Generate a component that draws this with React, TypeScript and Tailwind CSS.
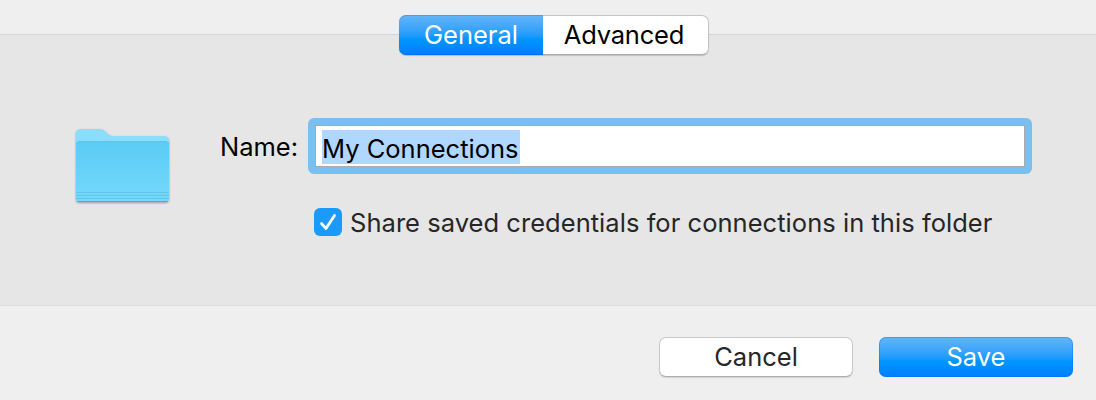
import { useState } from "react";

const tabs = [
  { label: "General", width: "w-[144px] rounded-l-[7px]" },
  {
    label: "Advanced",
    width: "w-[166px] rounded-r-[7px] pr-[3px] tracking-[-0.2px]",
  },
];

const blueFill =
  "bg-linear-to-b from-[#63b5f8] via-[#0096fc] via-60% to-[#007dff] text-white";

function FolderIcon() {
  return (
    <svg width="104" height="84" viewBox="0 0 104 84" aria-hidden="true">
      <defs>
        <linearGradient id="folder-front" x1="0" y1="0" x2="0" y2="1">
          <stop offset="0" stopColor="#5bcbf5" />
          <stop offset="1" stopColor="#74d9fb" />
        </linearGradient>
        <filter id="folder-shadow" x="-10%" y="-10%" width="120%" height="125%">
          <feDropShadow dx="0" dy="1" stdDeviation="1" floodOpacity="0.35" />
        </filter>
      </defs>
      <g filter="url(#folder-shadow)">
        <path
          d="M5 9q0-5 5-5h19q3 0 5 2l3 3q2 2 5 2h51q5 0 5 5v56q0 5-5 5H9q-4 0-4-4z"
          fill="#8bddfd"
        />
        <path
          d="M5 20q0-4 4-4h85q4 0 4 4v53q0 4-4 4H9q-4 0-4-4z"
          fill="url(#folder-front)"
        />
      </g>
      <path
        d="M5.500 19q0-2.500 3.500-2.500h85q3.500 0 3.500 2.500"
        fill="none"
        stroke="#5ac5ef"
      />
      <path d="M5 67.500h93M5 70.500h93M5 73.500h93" stroke="#62c6ea" />
      <path d="M6 76.500h91" stroke="#4fb0d2" />
    </svg>
  );
}

function App() {
  const [active, setActive] = useState("General");
  const [shared, setShared] = useState(true);

  return (
    <main className="flex h-[400px] w-[1096px] flex-col overflow-hidden bg-[#efefef] pt-[34px] font-['Inter',sans-serif] text-[25.5px] leading-[40px] text-black">
      <section className="flex h-[272px] flex-col border-y border-t-[#d5d5d5] border-b-[#dedede] bg-[#e6e6e6]">
        <div className="-mt-[20px] ml-[399px] flex h-[40px] w-[310px] rounded-[7px] shadow-[0_1px_1px_rgba(0,0,0,0.18)]">
          {tabs.map((tab) => (
            <button
              key={tab.label}
              onClick={() => setActive(tab.label)}
              className={`${tab.width} h-[40px] shrink-0 ${
                active === tab.label
                  ? `${blueFill} shadow-[inset_0_1px_0_rgba(0,110,220,0.3),inset_0_-1px_0_rgba(0,90,230,0.4)]`
                  : "border-y border-r border-[#c4c4c4] border-b-[#adadad] bg-white leading-[38px]"
              }`}
            >
              {tab.label}
            </button>
          ))}
        </div>

        <div className="mt-[63px] flex">
          <div className="mt-[7px] ml-[71px] h-[84px] w-[104px]">
            <FolderIcon />
          </div>
          <div className="ml-[45px] w-[88px] pt-[9px]">Name:</div>
          <div>
            <div className="h-[56px] w-[724px] rounded-[6px] bg-[#7bbfef] p-[7px]">
              <div className="h-[42px] border border-[#aaaaaa] bg-white pt-[4px] pl-[6px]">
                <span className="block h-[34px] w-[198px] bg-[#b0d7ff] leading-[38px] whitespace-nowrap">
                  My Connections
                </span>
              </div>
            </div>
            <button
              onClick={() => setShared(!shared)}
              className="mt-[29px] ml-[6px] flex items-center text-[#262626]"
            >
              <span className="mr-[8px] mb-[2px] flex size-[28px] items-center justify-center rounded-[6px] bg-[#1a9bfb]">
                {shared && (
                  <svg width="28" height="28" viewBox="0 0 28 28" fill="none">
                    <path
                      d="M7.500 15.500l4.500 5L20.500 7.500"
                      stroke="white"
                      strokeWidth="2.800"
                      strokeLinecap="round"
                      strokeLinejoin="round"
                    />
                  </svg>
                )}
              </span>
              <span className="whitespace-nowrap tracking-[0.04px]">
                Share saved credentials for connections in this folder
              </span>
            </button>
          </div>
        </div>
      </section>

      <footer className="mt-[31px] mr-[23px] flex justify-end gap-[26px]">
        <button className="h-[40px] w-[194px] rounded-[7px] border border-[#c8c8c8] border-b-[#adadad] bg-white leading-[38px] text-[#262626] shadow-[0_1px_1px_rgba(0,0,0,0.12)]">
          Cancel
        </button>
        <button
          className={`h-[40px] w-[194px] rounded-[7px] shadow-[inset_0_0_0_1px_rgba(0,110,240,0.35)] ${blueFill}`}
        >
          Save
        </button>
      </footer>
    </main>
  );
}

export default App;
